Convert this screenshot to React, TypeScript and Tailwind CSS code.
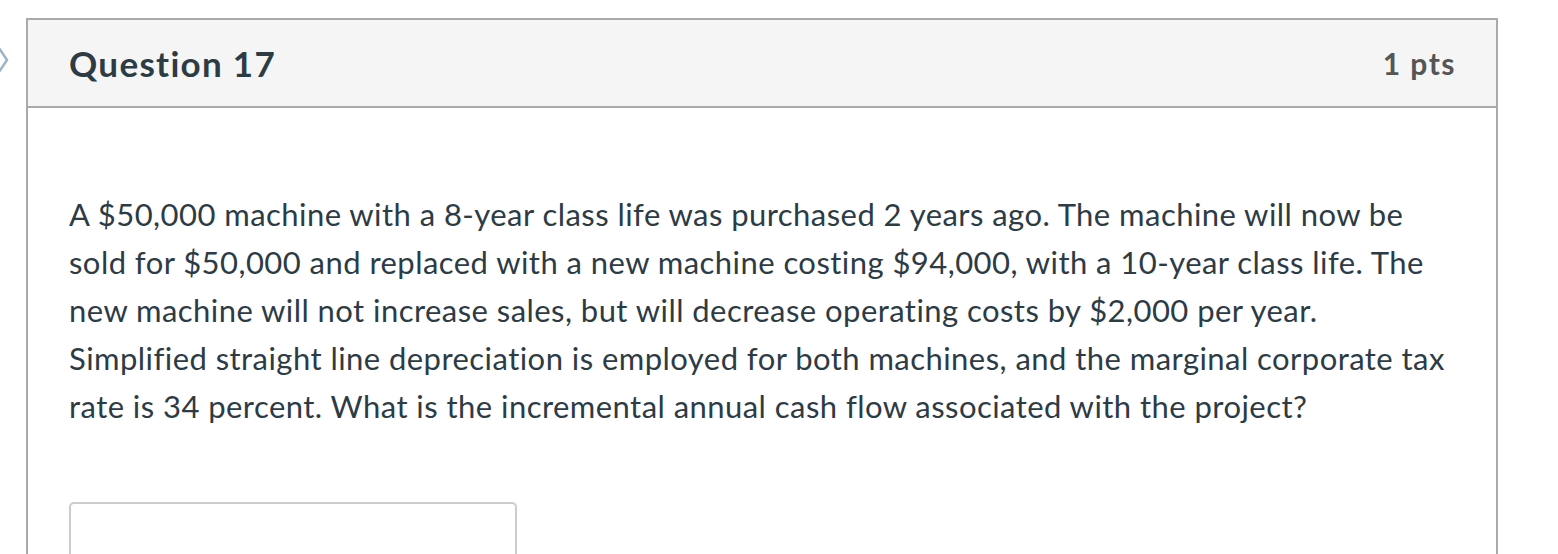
import React from 'react';

export default function App() {
  return (
    <div className="relative h-[554px] w-[1558px] overflow-hidden bg-white pl-[26px] pr-[60px] pt-[18px] font-['Lato','Liberation_Sans',sans-serif] text-[#2d3b45]">
      {/* partially hidden flag toggle on the left edge */}
      <svg className="absolute left-[-20px] top-[40px]" width="30" height="40" viewBox="0 0 30 40" fill="none">
        <path d="M17 5 L27 20 L17 35" stroke="#9fb4c5" strokeWidth="2.5" strokeLinejoin="round" strokeLinecap="round" />
      </svg>

      <div className="border-2 border-[#aaaaaa]">
        <div className="flex h-[88px] items-center justify-between border-b-2 border-[#aaaaaa] bg-[#f5f5f5] pl-[41px] pr-[40px]">
          <h2 className="text-[35px] font-bold leading-none tracking-[1.3px] text-[#2d3b45]">Question 17</h2>
          <div className="text-[30px] font-bold leading-none tracking-[1.5px] text-[#555555]">1 pts</div>
        </div>

        <div className="pl-[41px] pr-[38px] pt-[82px]">
          <p className="text-[31px] leading-[48px] tracking-[0.45px]">
            A $50,000 machine with a 8-year class life was purchased 2 years ago. The machine will now be sold for $50,000 and
            replaced with a new machine costing $94,000, with a 10-year class life. The new machine will not increase sales,
            but will decrease operating costs by $2,000 per year. Simplified straight line depreciation is employed for both
            machines, and the marginal corporate tax rate is 34 percent. What is the incremental annual cash flow associated
            with the project?
          </p>
          <div className="mt-[72px] h-[80px] w-[448px] rounded-[5px] border-2 border-[#cccccc] bg-white" />
        </div>
      </div>
    </div>
  );
}
